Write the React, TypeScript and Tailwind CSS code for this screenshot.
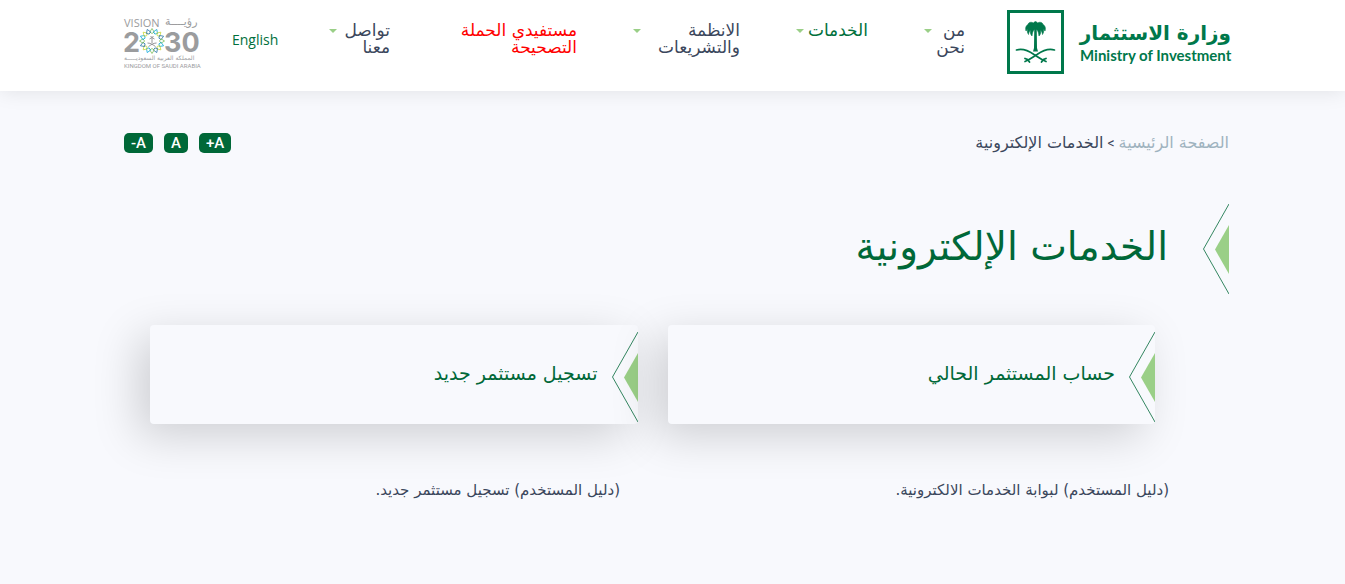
import React from 'react'

const NAV_ITEMS: Array<{
  label: string
  style: string
  hasMenu: boolean
}> = [
  { label: 'من نحن', style: 'w-[41px] text-[#3b475c]', hasMenu: true },
  { label: 'الخدمات', style: 'w-[72px] text-[#00703c]', hasMenu: true },
  { label: 'الانظمة والتشريعات', style: 'w-[107px] text-[#3b475c]', hasMenu: true },
  { label: 'مستفيدي الحملة التصحيحة', style: 'w-[131px] text-[#ff0000]', hasMenu: false },
  { label: 'تواصل معنا', style: 'w-[61px] text-[#3b475c]', hasMenu: true },
]

const SERVICES = ['حساب المستثمر الحالي', 'تسجيل مستثمر جديد']

const GUIDES = [
  '(دليل المستخدم) لبوابة الخدمات الالكترونية.',
  '(دليل المستخدم) تسجيل مستثمر جديد.',
]

// ─────────────────────────────────────────────────────────────────────────────
// Logos
// ─────────────────────────────────────────────────────────────────────────────
const Emblem = () => (
  <svg viewBox="0 0 57 64" className="h-16 w-[57px] shrink-0" aria-hidden="true">
    <rect x="1.5" y="1.5" width="54" height="61" fill="none" stroke="#00784b" strokeWidth="3" />
    {/* palm */}
    <path
      d="M28.5 11.500C29.500 11.500 30 12.500 30.500 13C33 11.500 35.500 12.500 36 14.500C38 15.500 39 18 38 21C37.500 20 37 19.500 36.500 19C37 21 36.500 23 35.500 24.500C35.300 22.500 34.500 21 33.500 20C34 22.500 33.500 24.500 32 26C31.800 23 31 21 29.800 19.500H27.200C26 21 25.200 23 25 26C23.500 24.500 23 22.500 23.500 20C22.500 21 21.700 22.500 21.500 24.500C20.500 23 20 21 20.500 19C20 19.500 19.500 20 19 21C18 18 19 15.500 21 14.500C21.500 12.500 24 11.500 26.500 13C27 12.500 27.500 11.500 28.500 11.500Z"
      fill="#00784b"
      stroke="#00784b"
      strokeWidth="0.6"
    />
    <path d="M27.300 18H29.700L30 38L31 41.500H26L27 38Z" fill="#00784b" />
    {/* crossed swords */}
    <g fill="none" stroke="#00784b" strokeLinecap="round">
      <path d="M9.500 40C16 38 22 41 27 44.500C31 47 34 49.500 39 51.500" strokeWidth="1.700" />
      <path d="M47.500 40C41 38 35 41 30 44.500C26 47 23 49.500 18 51.500" strokeWidth="1.700" />
      <path d="M18 48.500L20.500 49.500L22.500 52M39 48.500L36.500 49.500L34.500 52" strokeWidth="1.800" />
    </g>
  </svg>
)

const MinistryLogo = () => (
  <a href="#" className="flex shrink-0 items-start gap-4">
    <div className="w-[151px] pt-2 text-[#00784b]">
      <div className="text-xl leading-[30px] font-bold whitespace-nowrap">وزارة الاستثمار</div>
      <div
        dir="ltr"
        className="font-['Lato',sans-serif] text-[15px] leading-[14px] font-bold whitespace-nowrap"
      >
        Ministry of Investment
      </div>
    </div>
    <Emblem />
  </a>
)

const RAYS = Array.from({ length: 16 }, (_, i) => i * 22.5)
const RAY_COLORS = ['#6cb33f', '#00a3d9', '#c8d42a', '#1d6fa5']

const VisionLogo = () => (
  <svg
    viewBox="0 0 76 54"
    className="h-[54px] w-[76px] shrink-0 overflow-visible"
    role="img"
    aria-label="Vision 2030"
    direction="ltr"
  >
    <g fill="#9b9c9e">
      <text x="0" y="11" fontSize="11" className="font-['Open_Sans',sans-serif]">VISION</text>
      <text x="41" y="9" fontSize="11" className="font-['DejaVu_Sans',sans-serif]">رؤيــــة</text>
      <text x="0" y="44" fontSize="6" className="font-['DejaVu_Sans',sans-serif]">
        المملكة العربية السعوديـــــة
      </text>
      <text x="0" y="52" fontSize="6" className="font-['Roboto',sans-serif]">
        KINGDOM OF SAUDI ARABIA
      </text>
    </g>
    <g fill="#9b9c9e" fontSize="27" fontWeight="700" className="font-['Inter',sans-serif]">
      <text x="-1" y="36">2</text>
      <text x="40" y="36">30</text>
    </g>
    <g transform="translate(28 25)">
      <circle r="13" fill="#fff" />
      {RAYS.map((angle, idx) => (
        <g key={angle} transform={`rotate(${angle})`} fill="none" stroke={RAY_COLORS[idx % 4]}>
          <path d="M-2.200 -9L0 -12.500L2.200 -9L0 -7.500Z" strokeWidth="0.7" />
        </g>
      ))}
      <path
        d="M0 -3.500V2M0 -3.500L-2.500 -2M0 -3.500L2.500 -2M0 -3.500L-1.500 -5M0 -3.500L1.500 -5M-4.500 2C-1 2 1 4 3.500 5.500M4.500 2C1 2 -1 4 -3.500 5.500"
        fill="none"
        stroke="#8a8b8d"
        strokeWidth="0.9"
      />
    </g>
  </svg>
)

// ─────────────────────────────────────────────────────────────────────────────
// Shared bits
// ─────────────────────────────────────────────────────────────────────────────
const Caret = () => (
  <svg viewBox="0 0 8 4" className="mt-[7px] h-1 w-2 shrink-0" aria-hidden="true">
    <path d="M0 0H8L4 4Z" fill="#9acf87" />
  </svg>
)

const Chevron = () => (
  <svg viewBox="0 0 26 92" className="h-[92px] w-[26px] shrink-0" aria-hidden="true">
    <path d="M26 1L0.500 46L26 91" fill="none" stroke="#006838" strokeWidth="0.8" />
    <path d="M26 22L12 46.500L26 71Z" fill="#9acf87" />
  </svg>
)

const SizeButton = ({ label }: { label: string }) => (
  <button
    type="button"
    className="h-5 rounded-[5px] bg-[#006838] px-[7px] font-['Roboto',sans-serif] text-[15px] leading-5 font-medium text-white"
  >
    {label}
  </button>
)

const ServiceCard = ({ title }: { title: string }) => (
  <a
    href="#"
    className="relative flex h-[99px] items-start gap-[14px] rounded bg-[#f8f9fd] pt-[6px] shadow-[-12px_12px_45px_rgba(0,0,0,0.17)] first:z-10"
  >
    <Chevron />
    <h2 className="pt-[26px] text-[19px] leading-8 whitespace-nowrap text-[#006838]">{title}</h2>
  </a>
)

const App = () => {
  return (
    <div
      dir="rtl"
      className="min-h-screen bg-[#f8f9fd] font-['DejaVu_Sans',sans-serif] text-[#3b475c]"
    >
      <header className="bg-white shadow-[0_0_20px_rgba(0,0,0,0.1)]">
        <div className="flex h-[91px] justify-between pr-[114px] pl-[124px]">
          <div className="flex gap-[42px]">
            <div className="pt-[10px]">
              <MinistryLogo />
            </div>
            <nav className="flex gap-14 pt-[22px]">
              {NAV_ITEMS.map((item) => (
                <a
                  key={item.label}
                  href="#"
                  className={`flex items-start justify-between text-[17px] leading-[17px] ${item.style}`}
                >
                  <span>{item.label}</span>
                  {item.hasMenu && <Caret />}
                </a>
              ))}
            </nav>
          </div>
          <div className="flex items-start gap-8 pt-4">
            <a
              href="#"
              className="pt-[14px] font-['Open_Sans',sans-serif] text-sm leading-5 font-medium text-[#00703c]"
            >
              English
            </a>
            <VisionLogo />
          </div>
        </div>
      </header>
      <main className="pr-[116px] pl-[124px]">
        <div className="flex items-center justify-between pt-10">
          <nav className="flex gap-1 text-base leading-6 whitespace-nowrap">
            <a href="#" className="text-[#9fb3bf]">
              الصفحة الرئيسية
            </a>
            <span className="font-['Roboto',sans-serif] text-sm leading-6">&gt;</span>
            <span>الخدمات الإلكترونية</span>
          </nav>
          <div dir="ltr" className="flex gap-[11px]">
            <SizeButton label="-A" />
            <SizeButton label="A" />
            <SizeButton label="+A" />
          </div>
        </div>
        <div className="flex gap-[35px] pt-12">
          <Chevron />
          <h1 className="pt-[14px] text-[39px] leading-[60px] whitespace-nowrap text-[#006838]">
            الخدمات الإلكترونية
          </h1>
        </div>
        <div className="mr-[74px] ml-[26px] grid grid-cols-2 gap-[30px] pt-[30px]">
          {SERVICES.map((title) => (
            <ServiceCard key={title} title={title} />
          ))}
        </div>
        <div className="mr-[60px] grid grid-cols-2 gap-[53px] pt-[54px] text-[15px] leading-6">
          {GUIDES.map((guide) => (
            <a key={guide} href="#" className="whitespace-nowrap">
              {guide}
            </a>
          ))}
        </div>
      </main>
    </div>
  )
}

export default App
